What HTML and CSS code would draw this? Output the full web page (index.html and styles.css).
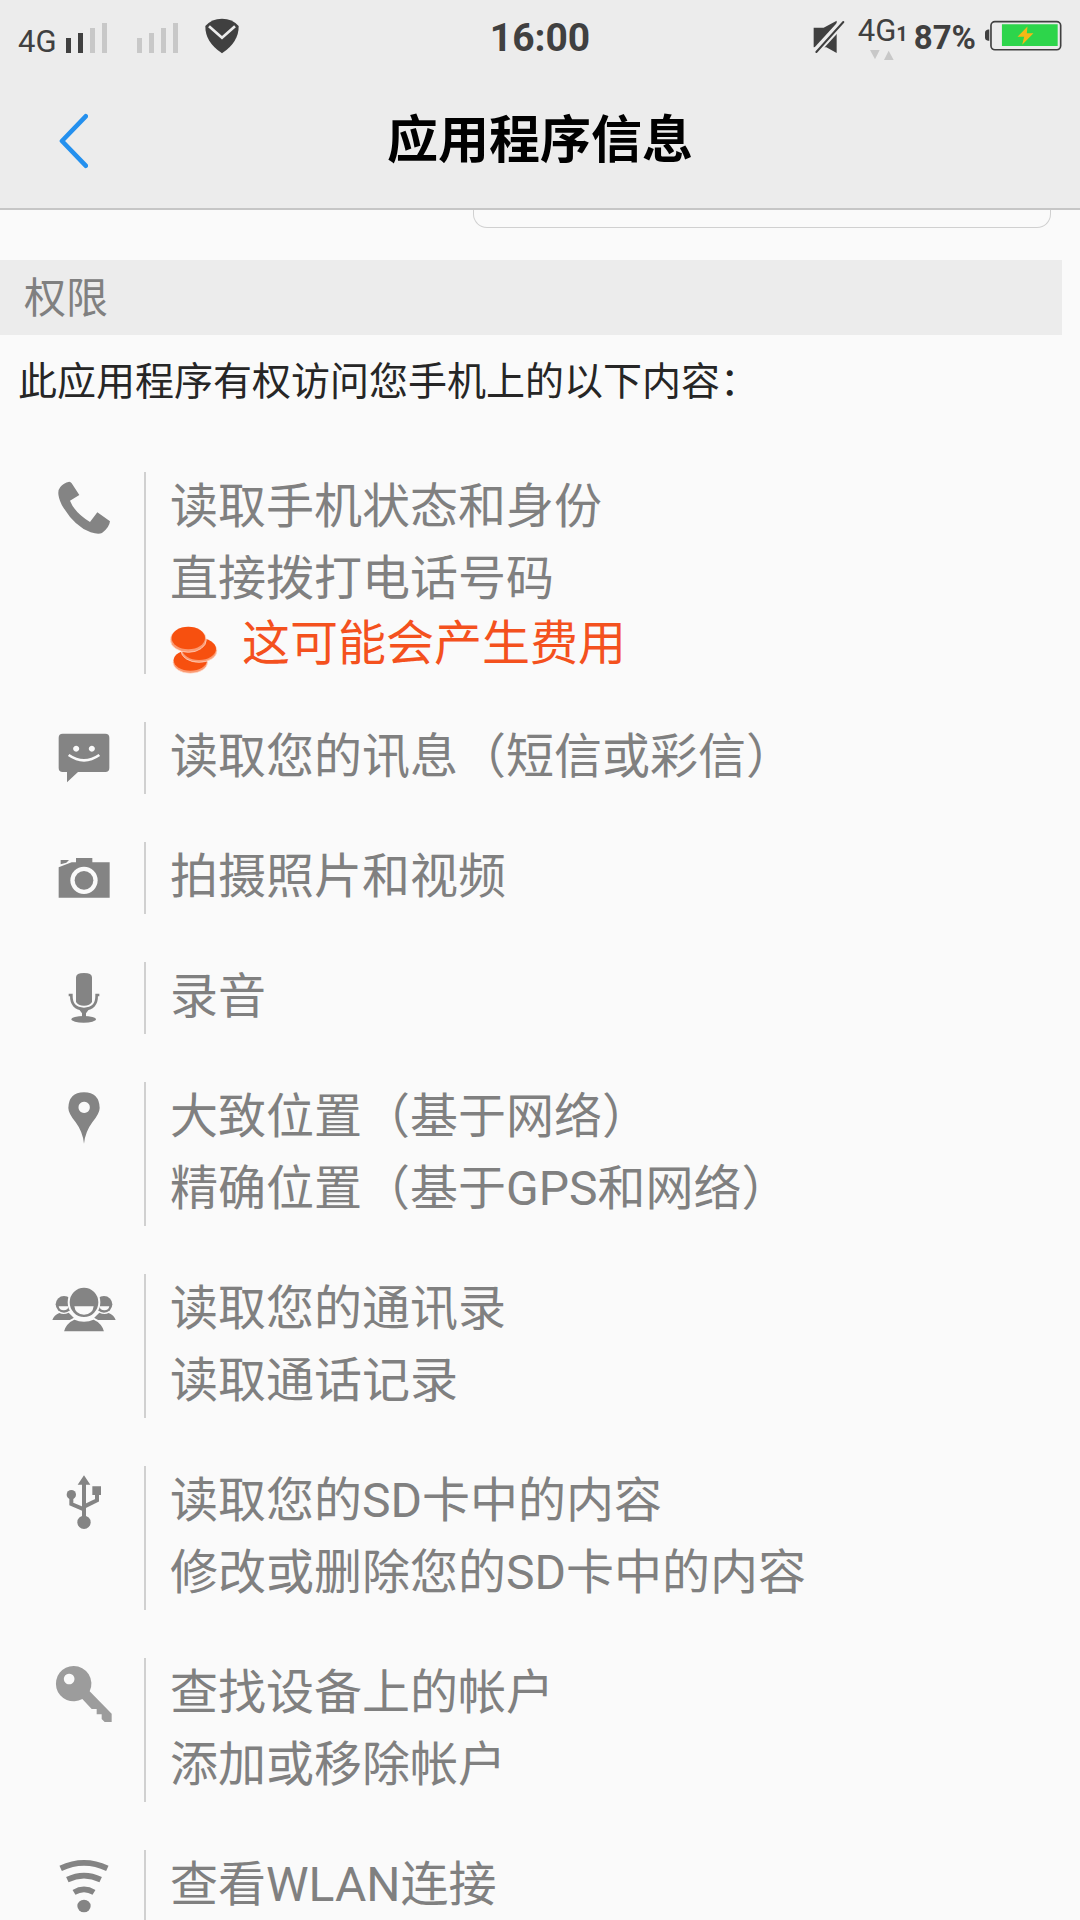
FILE: index.html
```html
<!DOCTYPE html>
<html lang="zh-CN">
<head>
<meta charset="utf-8">
<meta name="viewport" content="width=device-width, initial-scale=1">
<title>应用程序信息</title>
<link rel="stylesheet" href="styles.css">
</head>
<body>
<div class="app">
  <div class="status">
    <div class="status-left">
      <span class="network">4G</span>
      <svg class="signal" viewBox="0 0 42 30" aria-hidden="true">
        <path class="dark" d="M0 15h5v15H0zM12 10h5v20h-5z"/>
        <path class="faint" d="M24 5h5v25h-5zM36 0h5v30h-5z"/>
      </svg>
      <svg class="signal second" viewBox="0 0 42 30" aria-hidden="true">
        <path class="faint" d="M0 15h5v15H0zM12 10h5v20h-5zM24 5h5v25h-5zM36 0h5v30h-5z"/>
      </svg>
      <svg class="shield" viewBox="0 0 102 108" aria-hidden="true">
        <path class="dark" d="M1 24Q20 2 51 2t50 22Q102 72 51 106Q0 72 1 24z"/>
        <path class="notch" d="M12 25L51 59L90 25"/>
      </svg>
    </div>
    <time class="clock">16:00</time>
    <div class="status-right">
      <svg class="mute" viewBox="0 0 96 102" aria-hidden="true">
        <path class="dark" d="M2 23H32L71 2V99L40 82H2z"/>
        <path class="mute-gap" d="M9 94L91 4"/>
        <path class="mute-line" d="M10 96L91 6"/>
        <path class="mute-inner" d="M4 88L76 8"/>
      </svg>
      <div class="data">
        <span class="data-label">4G<b class="sim">1</b></span>
        <svg class="arrows" viewBox="0 0 72 30" aria-hidden="true"><path class="faint" d="M0 0h29L15 28zM42 30h29L56 2z"/></svg>
      </div>
      <span class="percent">87%</span>
      <svg class="battery" viewBox="0 0 232 92" aria-hidden="true">
        <path class="dark" d="M13 28v34H9Q0 60 0 52V38q0-8 9-10z"/>
        <rect class="battery-case" x="18" y="4" width="210" height="85" rx="12"/>
        <path class="charge" d="M51 12h168v66H51z"/>
        <path class="bolt" d="M128 19L98 50h20l-6 24 34-35h-20z"/>
      </svg>
    </div>
  </div>

  <header class="titlebar">
    <button class="back" type="button">
      <svg viewBox="0 0 88 168" aria-hidden="true"><path d="M81 9L9 84L81 159"/></svg>
    </button>
    <h1>应用程序信息</h1>
  </header>

  <main class="content">
    <button class="action" type="button"></button>
    <h2 class="section">权限</h2>
    <p class="intro">此应用程序有权访问您手机上的以下内容：</p>

    <ul class="groups">
      <li class="group">
        <svg class="icon" viewBox="54 66 216 216" aria-hidden="true"><path d="M118 95Q122 95 125 100L148 135L120 152Q134 188 180 216L202 187L240 214Q238 233 216 249Q205 254 182 247Q132 229 95 164Q77 127 91 111Q100 99 118 95z"/></svg>
        <div class="lines">
          <p>读取手机状态和身份</p>
          <p>直接拨打电话号码</p>
          <p class="cost">
            <svg class="coins" viewBox="420 525 144 147" aria-hidden="true">
              <ellipse class="edge" cx="481" cy="637" rx="52" ry="33"/>
              <ellipse class="coin" cx="481" cy="631" rx="50" ry="31"/>
              <ellipse class="edge" cx="507" cy="602" rx="54" ry="35"/>
              <ellipse class="coin" cx="507" cy="597" rx="51" ry="33"/>
              <ellipse class="edge" cx="475" cy="569" rx="54" ry="38"/>
              <ellipse class="coin" cx="475" cy="564" rx="50" ry="34"/>
            </svg>
            <span>这可能会产生费用</span>
          </p>
        </div>
      </li>
      <li class="group">
        <svg class="icon" viewBox="54 36 216 216" aria-hidden="true"><path fill-rule="evenodd" d="M98 71H226Q238 71 238 83V174Q238 186 226 186H144L111 217V186H98Q86 186 86 174V83Q86 71 98 71zM138 107a9 9 0 1 0 1 0zM185 107a9 9 0 1 0 1 0z"/><path class="cut-line" d="M116 135Q162 167 208 135"/></svg>
        <div class="lines"><p>读取您的讯息（短信或彩信）</p></div>
      </li>
      <li class="group">
        <svg class="icon" viewBox="54 396 216 216" aria-hidden="true"><path d="M92 450H117L109 458L92 463zM86 472L125 457H138V444H187V457H239V563H86z"/><circle class="cut" cx="162" cy="511" r="41"/><circle cx="162" cy="511" r="28"/></svg>
        <div class="lines"><p>拍摄照片和视频</p></div>
      </li>
      <li class="group">
        <svg class="icon" viewBox="54 756 216 216" aria-hidden="true"><path d="M138 802Q138 789 162 789T186 802V876Q180 887 162 887T138 876z"/><path class="stroke-thin" d="M116 855H124Q123 897 162 897T200 855H208"/><path d="M147 898H177L168 910V921H156V910z"/><ellipse cx="161" cy="928" rx="37" ry="10"/></svg>
        <div class="lines"><p>录音</p></div>
      </li>
      <li class="group">
        <svg class="icon" viewBox="54 36 216 216" aria-hidden="true"><path fill-rule="evenodd" d="M162 67Q208 68 209 114Q209 130 187 157Q166 185 162 221Q158 185 137 157Q115 130 115 114Q116 68 162 67zM162 95a17 17 0 1 0 1 0z"/></svg>
        <div class="lines">
          <p>大致位置（基于网络）</p>
          <p>精确位置（基于GPS和网络）</p>
        </div>
      </li>
      <li class="group">
        <svg class="icon" viewBox="54 612 216 216" aria-hidden="true">
          <circle cx="102" cy="703" r="25"/><circle cx="222" cy="703" r="25"/>
          <path class="cut" d="M86 709H116Q114 721 101 721T86 709zM208 709H238Q236 721 223 721T208 709z"/>
          <path d="M67 750Q72 735 88 729Q101 736 116 728L138 750zM257 750Q252 735 236 729Q223 736 208 728L186 750z"/>
          <path class="group-front" d="M98 787Q105 758 133 746Q162 759 191 746Q219 758 226 787z"/>
          <ellipse class="group-front" cx="162" cy="697" rx="46" ry="47"/>
          <path class="cut" d="M133 709H191Q188 734 162 734T133 709z"/>
        </svg>
        <div class="lines">
          <p>读取您的通讯录</p>
          <p>读取通话记录</p>
        </div>
      </li>
      <li class="group">
        <svg class="icon" viewBox="54 48 216 216" aria-hidden="true"><path d="M162 76L181 104H143zM187 109H213V135H187z"/><circle cx="124" cy="134" r="14"/><circle cx="162" cy="217" r="20"/><path class="stroke" d="M162 100V205M124 134V162L162 178M201 125V151L162 170"/></svg>
        <div class="lines">
          <p>读取您的SD卡中的内容</p>
          <p>修改或删除您的SD卡中的内容</p>
        </div>
      </li>
      <li class="group">
        <svg class="icon pale" viewBox="54 624 216 216" aria-hidden="true"><path fill-rule="evenodd" d="M131 648A53 53 0 0 1 179 724L245 791V816H224L215 807V793H200V777H185L157 747A53 53 0 1 1 131 648zM117 671a16 16 0 1 0 1 0z"/></svg>
        <div class="lines">
          <p>查找设备上的帐户</p>
          <p>添加或移除帐户</p>
        </div>
      </li>
      <li class="group">
        <svg class="icon" viewBox="54 210 216 216" aria-hidden="true"><ellipse cx="162" cy="378" rx="20" ry="19"/><path class="arc" d="M92 265Q162 232 232 265M112 299Q162 275 212 299M132 337Q162 319 192 337"/></svg>
        <div class="lines"><p>查看WLAN连接</p></div>
      </li>
    </ul>
  </main>
</div>
</body>
</html>
```
FILE: styles.css
```css
* {
  box-sizing: border-box;
}

body,
h1,
h2,
p,
ul {
  margin: 0;
  padding: 0;
}

body {
  background: #fafafa;
  color: #808080;
  font-family: Roboto, "Noto Sans CJK SC", sans-serif;
}

button {
  padding: 0;
  border: 0;
  background: none;
}

svg {
  display: block;
  flex: none;
}

.app {
  display: flex;
  flex-direction: column;
  height: 100vh;
}

/* Status bar */

.status {
  display: grid;
  grid-template-columns: 1fr auto 1fr;
  flex: none;
  height: 72px;
  padding: 0 18px;
  background: #ececec;
  color: #404040;
}

.status-left,
.status-right {
  display: flex;
  align-items: flex-start;
}

.status-right {
  justify-content: flex-end;
}

.network {
  padding-top: 24px;
  font-size: 31px;
  line-height: 36px;
}

.signal {
  width: 42px;
  height: 30px;
  margin: 23px 0 0 9px;
}

.signal.second {
  margin-left: 29px;
}

.shield {
  width: 34px;
  height: 36px;
  margin: 18px 0 0 26px;
}

.dark {
  fill: #404040;
}

.faint {
  fill: #c8c8c8;
}

.notch {
  fill: none;
  stroke: #ececec;
  stroke-width: 8;
}

.clock {
  padding-top: 14px;
  font-size: 39px;
  font-weight: 700;
  line-height: 48px;
}

.mute {
  width: 32px;
  height: 34px;
  margin: 20px 13px 0 0;
}

.mute-gap {
  stroke: #ececec;
  stroke-width: 22;
}

.mute-line,
.mute-inner {
  stroke: #404040;
  stroke-width: 6;
  stroke-linecap: round;
}

.mute-inner {
  stroke: #ececec;
  stroke-width: 2;
}

.data {
  padding-top: 15px;
}

.data-label {
  display: block;
  font-size: 31px;
  line-height: 32px;
}

.sim {
  font-size: 20px;
}

.arrows {
  width: 24px;
  height: 10px;
  margin-left: 12px;
}

.percent {
  padding: 18px 9px 0 6px;
  font-size: 33px;
  font-weight: 700;
  line-height: 40px;
}

.battery {
  width: 77px;
  height: 31px;
  margin-top: 20px;
}

.battery-case {
  fill: none;
  stroke: #404040;
  stroke-width: 5;
}

.charge {
  fill: #2dd54b;
}

.bolt {
  fill: #f6b816;
}

/* Title bar */

.titlebar {
  display: grid;
  grid-template-columns: 1fr auto 1fr;
  align-items: center;
  flex: none;
  height: 138px;
  padding-top: 2px;
  border-bottom: 2px solid #c6c6c6;
  background: #ececec;
}

.back {
  justify-self: start;
  padding: 0 30px 0 59px;
}

.back svg {
  width: 29px;
  height: 56px;
}

.back path {
  fill: none;
  stroke: #2490ee;
  stroke-width: 14;
  stroke-linecap: round;
  stroke-linejoin: round;
}

h1 {
  color: #000;
  font-size: 51px;
  font-weight: 700;
  line-height: 72px;
}

/* Scrolling content */

.content {
  flex: 1;
  min-height: 0;
  overflow-y: auto;
  scrollbar-width: none;
}

.action {
  display: block;
  width: calc(55% - 16px);
  height: 18px;
  margin: 0 29px 32px auto;
  border: 1px solid #d0d0d0;
  border-top: 0;
  border-radius: 0 0 14px 14px;
}

.section {
  height: 75px;
  margin-right: 18px;
  padding-left: 24px;
  background: #ececec;
  font-size: 42px;
  font-weight: 400;
  line-height: 78px;
}

.intro {
  padding: 17px 18px 0;
  color: #262626;
  font-size: 39px;
  line-height: 60px;
}

.groups {
  display: flex;
  flex-direction: column;
  gap: 48px;
  padding: 60px 18px 48px 48px;
  list-style: none;
}

.group {
  display: flex;
  gap: 24px;
}

.icon {
  width: 72px;
  height: 72px;
  fill: #848484;
}

.pale {
  fill: #9c9c9c;
}

.lines {
  flex: 1;
  padding-left: 24px;
  border-left: 2px solid #d0d0d0;
  font-size: 48px;
  line-height: 70px;
}

.lines p {
  height: 72px;
}

.lines .cost {
  display: flex;
  align-items: flex-end;
  gap: 24px;
  height: 58px;
  color: #f4511e;
  line-height: 60px;
}

.coins {
  width: 48px;
  height: 49px;
}

.coin {
  fill: #f7500f;
}

.edge {
  fill: #fb9a72;
  stroke: #ffe3d6;
  stroke-width: 2;
}

.cut {
  fill: #fafafa;
}

.cut-line,
.stroke,
.stroke-thin,
.arc {
  fill: none;
  stroke: #848484;
}

.cut-line {
  stroke: #fafafa;
  stroke-width: 8;
}

.stroke {
  stroke-width: 12;
}

.stroke-thin {
  stroke-width: 8;
}

.arc {
  stroke-width: 17;
}

.group-front {
  stroke: #fafafa;
  stroke-width: 6;
}
```
